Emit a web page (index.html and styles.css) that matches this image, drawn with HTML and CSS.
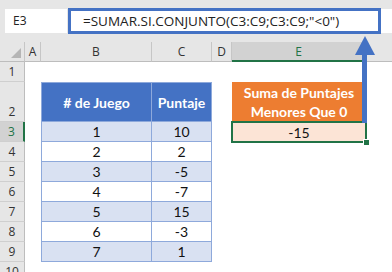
FILE: index.html
```html
<!DOCTYPE html>
<html lang="es">
<head>
<meta charset="utf-8">
<title>SUMAR.SI.CONJUNTO</title>
<link rel="stylesheet" href="styles.css">
</head>
<body>
<div class="app">
  <div class="topbar">
    <div class="namebox">E3</div>
    <div class="fx">
      <div class="fx-hl">=SUMAR.SI.CONJUNTO(C3:C9;C3:C9;"&lt;0")</div>
    </div>
  </div>
  <div class="sheet">
    <div class="ch corner"><svg width="10" height="10" viewBox="0 0 10 10"><polygon points="10,0 10,10 0,10" fill="#b5b5b5"/></svg></div>
    <div class="ch">A</div><div class="ch">B</div><div class="ch">C</div><div class="ch">D</div><div class="ch sel">E</div><div class="ch last"></div>

    <div class="rh">1</div><div></div><div></div><div></div><div></div><div></div><div></div>

    <div class="rh">2</div><div></div>
    <div class="tc th first">#&nbsp;de Juego</div><div class="tc th">Puntaje</div>
    <div></div><div class="sum-h">Suma de Puntajes<br>Menores Que 0</div><div></div>

    <div class="rh sel">3</div><div></div><div class="tc odd first">1</div><div class="tc odd">10</div><div></div><div class="sum-v">-15<span class="handle"></span></div><div></div>
    <div class="rh">4</div><div></div><div class="tc first">2</div><div class="tc">2</div><div></div><div></div><div></div>
    <div class="rh">5</div><div></div><div class="tc odd first">3</div><div class="tc odd">-5</div><div></div><div></div><div></div>
    <div class="rh">6</div><div></div><div class="tc first">4</div><div class="tc">-7</div><div></div><div></div><div></div>
    <div class="rh">7</div><div></div><div class="tc odd first">5</div><div class="tc odd">15</div><div></div><div></div><div></div>
    <div class="rh">8</div><div></div><div class="tc first">6</div><div class="tc">-3</div><div></div><div></div><div></div>
    <div class="rh">9</div><div></div><div class="tc odd first">7</div><div class="tc odd">1</div><div></div><div></div><div></div>
    <div class="rh">10</div><div></div><div></div><div></div><div></div><div></div><div></div>
  </div>
  <svg class="arrow" width="22" height="90" viewBox="0 0 22 90">
    <polygon points="11,1 1,20 21,20" fill="#4472C4"/>
    <rect x="8" y="19" width="5" height="69" fill="#4472C4"/>
  </svg>
</div>
</body>
</html>
```
FILE: styles.css
```css
* { box-sizing: border-box; }
html, body { margin: 0; padding: 0; }
body {
  width: 392px;
  height: 272px;
  overflow: hidden;
  background: #ffffff;
  font-family: "Open Sans", "Noto Sans", sans-serif;
}
.app {
  position: relative;
  width: 392px;
  height: 272px;
  overflow: hidden;
}
.topbar {
  height: 42px;
  background: #e6e6e6;
  display: flex;
  align-items: flex-start;
  gap: 1px;
  padding: 9px 0 0 5px;
}
.namebox {
  width: 62px;
  height: 24px;
  background: #fff;
  padding-left: 8px;
  font-size: 12px;
  line-height: 24px;
  color: #222;
}
.fx {
  flex: 1;
  height: 24px;
  background: #fff;
  display: flex;
}
.fx-hl {
  width: 313px;
  height: 26px;
  margin-top: -1px;
  border: 3px solid #4472C4;
  padding-left: 12px;
  font-size: 13.5px;
  line-height: 20px;
  color: #222;
  white-space: nowrap;
}
.sheet {
  display: grid;
  grid-template-columns: 25px 16px 111px 60px 20px 134px 1fr;
  grid-template-rows: 20px 20px 40px repeat(8, 20px);
}
.ch {
  background: #e6e6e6;
  border-right: 1px solid #c6c6c6;
  border-bottom: 1px solid #bdbdbd;
  font-size: 12px;
  color: #333;
  display: flex;
  align-items: center;
  justify-content: center;
}
.ch.last { border-right: none; }
.ch.corner {
  align-items: flex-end;
  justify-content: flex-end;
  padding: 0 3px 3px 0;
}
.ch.sel {
  background: #d2d2d2;
  border-bottom: 2px solid #217346;
  color: #217346;
}
.rh {
  background: #e6e6e6;
  border-right: 1px solid #bdbdbd;
  border-bottom: 1px solid #cfcfcf;
  font-size: 12px;
  color: #333;
  display: flex;
  align-items: flex-end;
  justify-content: center;
  line-height: 19px;
}
.rh.sel {
  background: #d2d2d2;
  border-right: 2px solid #217346;
  color: #217346;
}
.tc {
  font-family: "Lato", "Liberation Sans", sans-serif;
  font-size: 14px;
  color: #111;
  background: #fff;
  border-right: 1px solid #8EA9DB;
  border-bottom: 1px solid #8EA9DB;
  display: flex;
  align-items: center;
  justify-content: center;
}
.tc.first { border-left: 1px solid #8EA9DB; }
.tc.odd { background: #D9E1F2; }
.tc.th {
  background: #4472C4;
  color: #fff;
  font-weight: bold;
  border-top: 1px solid #8EA9DB;
}
.sum-h {
  background: #ED7D31;
  color: #fff;
  font-family: "Lato", "Liberation Sans", sans-serif;
  font-weight: bold;
  font-size: 14px;
  line-height: 19px;
  text-align: center;
  display: flex;
  align-items: center;
  justify-content: center;
}
.sum-v {
  position: relative;
  background: #FCE4D6;
  font-family: "Lato", "Liberation Sans", sans-serif;
  font-size: 14px;
  color: #111;
  display: flex;
  align-items: center;
  justify-content: center;
  outline: 2px solid #217346;
  outline-offset: -1px;
}
.handle {
  position: absolute;
  right: -4px;
  bottom: -4px;
  width: 7px;
  height: 7px;
  background: #217346;
  border: 1px solid #fff;
}
.arrow {
  position: absolute;
  left: 354px;
  top: 35px;
}
```
